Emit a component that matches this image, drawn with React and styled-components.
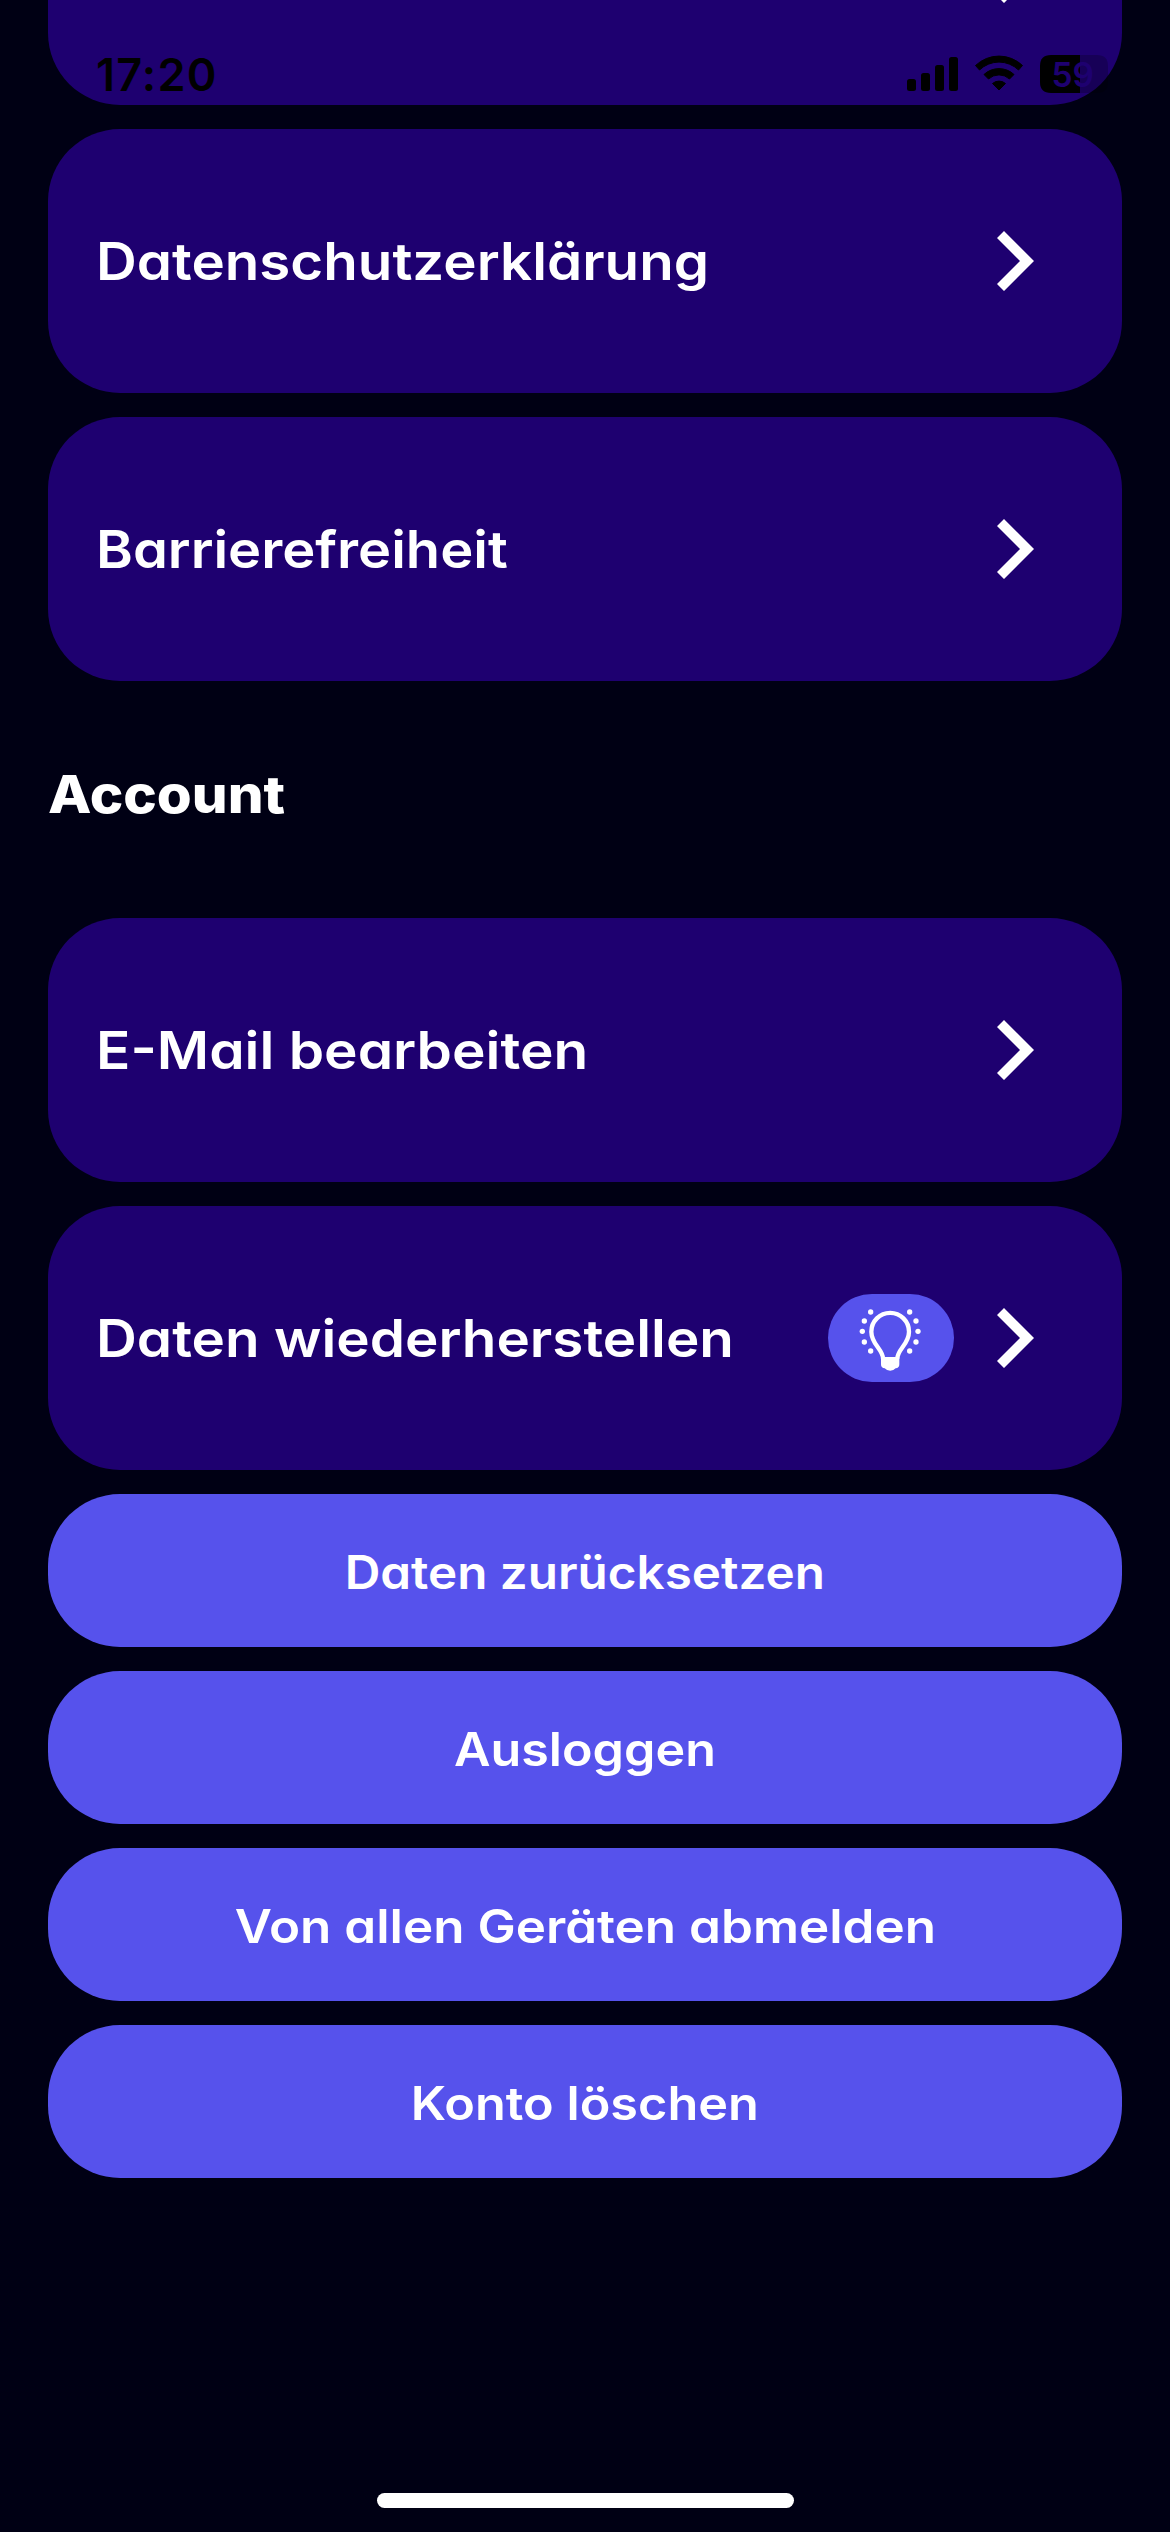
import React from "react";
import styled, { createGlobalStyle } from "styled-components";

const Global = createGlobalStyle`
  * { box-sizing: border-box; }
  body { margin: 0; background: #000014; }
`;

const Screen = styled.main`
  position: relative;
  width: 1170px;
  height: 2532px;
  overflow: hidden;
  background: #000014;
  color: #fff;
  font-family: Inter, "Open Sans", sans-serif;
  font-feature-settings: "cv11", "ss03";
`;

const List = styled.div`
  display: flex;
  flex-direction: column;
  gap: 24px;
  margin-top: -159px;
  padding: 0 48px;
`;

const Card = styled.div`
  display: flex;
  align-items: center;
  justify-content: flex-end;
  height: 264px;
  padding: 0 88px 0 48px;
  border-radius: 72px;
  background: #1e0070;
`;

const WideText = styled.span`
  display: inline-block;
  transform: scaleX(${(p) => p.$stretch});
  transform-origin: ${(p) => p.$origin || "left"} center;
  white-space: nowrap;
`;

const Label = styled.span`
  flex: 1;
  padding-top: 2px;
  font-size: 52px;
  font-weight: 600;
  line-height: 64px;
`;

const Heading = styled.h2`
  display: flex;
  align-items: center;
  height: 189px;
  margin: 0;
  padding-bottom: 11px;
  font-size: 52px;
  font-weight: 800;
`;

const Button = styled.button`
  display: flex;
  align-items: center;
  justify-content: center;
  height: 153px;
  padding: 2px 0 0;
  border: 0;
  border-radius: 72px;
  background: #5652ec;
  color: #fff;
  font: inherit;
  font-feature-settings: inherit;
  font-size: 46px;
  font-weight: 600;
`;

const Badge = styled.span`
  display: flex;
  width: 126px;
  height: 88px;
  margin-right: 43px;
  border-radius: 44px;
  background: #5652ec;
`;

const StatusBar = styled.header`
  position: absolute;
  inset: 0 0 auto 0;
  display: flex;
  justify-content: space-between;
  height: 141px;
  padding: 47px 50px 0 96px;
  color: #000;
`;

const Time = styled.span`
  font-size: 45px;
  font-weight: 600;
  line-height: 55px;
  letter-spacing: 1.2px;
`;

const StatusGlyphs = styled.svg`
  margin-top: 7px;
`;

const HomeIndicator = styled.div`
  position: absolute;
  left: 377px;
  bottom: 24px;
  width: 417px;
  height: 15px;
  border-radius: 8px;
  background: #fff;
`;

const Chevron = () => (
  <svg width="37" height="60" viewBox="0 0 37 60">
    <path d="M7 0L37 30L7 60L0 53L23 30L0 7Z" fill="#fff" />
  </svg>
);

const dots = [[128, 54], [109, 81], [103, 112], [109, 144], [128, 171]];

const Bulb = () => (
  <svg width="126" height="88" viewBox="0 0 378 264" fill="#fff">
    {dots.map(([x, y]) => (
      <React.Fragment key={y}>
        <circle cx={x} cy={y} r="8" />
        <circle cx={373 - x} cy={y} r="8" />
      </React.Fragment>
    ))}
    <path
      d="M165 194C165 166 130 151 130 113A56.500 56.500 0 0 1 243 113C243 151 208 166 208 194"
      fill="none"
      stroke="#fff"
      strokeWidth="13"
    />
    <path d="M159 189H214V211Q214 222 203 223Q197 230 186.500 230Q176 230 170 223Q159 222 159 211Z" />
  </svg>
);

const StatusIcons = () => (
  <StatusGlyphs width="214" height="42" viewBox="0 0 214 42">
    <rect x="1" y="25" width="9" height="12" rx="2.500" />
    <rect x="15" y="19" width="9" height="18" rx="2.500" />
    <rect x="29" y="11" width="9" height="26" rx="2.500" />
    <rect x="43" y="3" width="9" height="34" rx="2.500" />
    <g stroke="#000" strokeLinejoin="round">
      <path d="M69.500 11.500A34 34 0 0 1 116.500 11.500L112.500 16A28 28 0 0 0 73.500 16Z" />
      <path d="M78 20.500A22 22 0 0 1 108 20.500L103.500 25A15.500 15.500 0 0 0 82.500 25Z" />
      <path d="M86.500 29.500A10 10 0 0 1 99.500 29.500L93 36Z" />
    </g>
    <path d="M174 1H191Q202 1 202 12V28Q202 39 191 39H174Z" fillOpacity=".22" />
    <path d="M174 1H145Q134 1 134 12V28Q134 39 145 39H174Z" />
    <text x="145.500" y="32.500" fill="#1e0070" fontSize="33.500" fontWeight="600">59</text>
  </StatusGlyphs>
);

function Row({ label, stretch, badge }) {
  return (
    <Card>
      <Label>
        <WideText $stretch={stretch}>{label}</WideText>
      </Label>
      {badge && (
        <Badge>
          <Bulb />
        </Badge>
      )}
      <Chevron />
    </Card>
  );
}

const actions = [
  { label: "Daten zurücksetzen", stretch: 1.073 },
  { label: "Ausloggen", stretch: 1.092 },
  { label: "Von allen Geräten abmelden", stretch: 1.112 },
  { label: "Konto löschen", stretch: 1.096 },
];

export default function App() {
  return (
    <>
      <Global />
      <Screen>
        <List>
          <Card>
            <Chevron />
          </Card>
          <Row label="Datenschutzerklärung" stretch={1.086} />
          <Row label="Barrierefreiheit" stretch={1.077} />
          <Heading>
            <WideText $stretch={1.086}>Account</WideText>
          </Heading>
          <Row label="E-Mail bearbeiten" stretch={1.092} />
          <Row label="Daten wiederherstellen" stretch={1.088} badge />
          {actions.map(({ label, stretch }) => (
            <Button key={label}>
              <WideText $origin="center" $stretch={stretch}>{label}</WideText>
            </Button>
          ))}
        </List>
        <StatusBar>
          <Time>17:20</Time>
          <StatusIcons />
        </StatusBar>
        <HomeIndicator />
      </Screen>
    </>
  );
}
